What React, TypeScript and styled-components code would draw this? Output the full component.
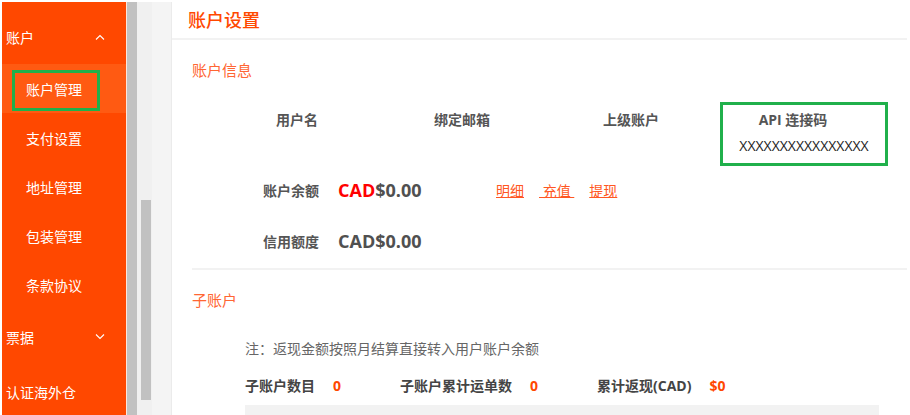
import React from "react";
import styled, { createGlobalStyle } from "styled-components";

const GlobalStyle = createGlobalStyle`
  html, body {
    margin: 0;
    padding: 0;
    background: #ffffff;
  }
  body {
    font-family: "Open Sans", "Noto Sans CJK SC", sans-serif;
  }
`;

const Page = styled.div`
  display: flex;
  height: 415px;
  overflow: hidden;
  background: #ffffff;
`;

const Sidebar = styled.nav`
  width: 124px;
  margin: 2px 0 0 2px;
  background: #ff4800;
  border-right: 1px solid #ffe6dc;
  color: #ffffff;
  font-size: 14px;
`;

const GroupHead = styled.div<{ $top?: number; $height: number }>`
  position: relative;
  display: flex;
  align-items: center;
  justify-content: space-between;
  height: ${(p) => p.$height}px;
  padding: ${(p) => p.$top || 0}px 21px 0 4px;
  box-sizing: border-box;
`;

const Item = styled.div<{ $active?: boolean }>`
  position: relative;
  display: flex;
  align-items: center;
  height: 49px;
  padding-left: 24px;
  background: ${(p) => (p.$active ? "#ff5a12" : "transparent")};
`;

const Mark = styled.span`
  position: absolute;
  left: 10px;
  top: 6px;
  width: 88px;
  height: 41px;
  border: 3px solid #20b04b;
  box-sizing: border-box;
`;

const Gutter = styled.div`
  width: 10px;
  margin-top: 2px;
  background: #c1c1c1;
`;

const Track = styled.div`
  width: 15px;
  margin-top: 2px;
  padding: 198px 0 0 4px;
  box-sizing: border-box;
  background: #f0f0f0;
`;

const Thumb = styled.div`
  width: 10px;
  height: 200px;
  background: #c1c1c1;
`;

const Backdrop = styled.div`
  width: 19px;
  margin-top: 2px;
  background: #f4f4f4;
  border-right: 1px solid #ebebeb;
`;

const Main = styled.main`
  flex: 1;
  margin-right: 3px;
  background: #ffffff;
`;

const Header = styled.header`
  height: 38px;
  display: flex;
  align-items: center;
  padding-left: 16px;
  border-bottom: 2px solid #f2f2f2;
  color: #ff4800;
  font-size: 18px;
  font-weight: 500;
`;

const Body = styled.div`
  padding: 20px 0 0 20px;
`;

const SectionTitle = styled.div<{ $gap?: number }>`
  margin-top: ${(p) => p.$gap || 0}px;
  line-height: 20px;
  font-size: 15px;
  color: #ff6633;
`;

const InfoGrid = styled.div`
  display: grid;
  grid-template-columns: 170px 160px 178px 168px;
  margin: 22px 0 0 20px;
  height: 64px;
`;

const InfoCell = styled.div<{ $boxed?: boolean }>`
  display: flex;
  flex-direction: column;
  align-items: center;
  padding-top: ${(p) => (p.$boxed ? 5 : 8)}px;
  border: ${(p) => (p.$boxed ? "3px solid #20b04b" : "none")};
  box-sizing: border-box;
`;

const InfoLabel = styled.div<{ $shift?: number }>`
  margin-right: ${(p) => p.$shift || 0}px;
  line-height: 20px;
  font-size: 14px;
  font-weight: 700;
  color: #555555;
`;

const Code = styled.div`
  margin-top: 6px;
  line-height: 20px;
  font-size: 14px;
  color: #222222;
`;

const MoneyRow = styled.div<{ $gap: number }>`
  display: flex;
  align-items: center;
  height: 24px;
  margin: ${(p) => p.$gap}px 0 0 71px;
`;

const MoneyLabel = styled.div`
  width: 75px;
  font-size: 14px;
  font-weight: 700;
  color: #555555;
`;

const Amount = styled.div`
  width: 158px;
  font-size: 18px;
  font-weight: 700;
  color: #505050;
`;

const Currency = styled.span<{ $red?: boolean }>`
  color: ${(p) => (p.$red ? "#ff0000" : "inherit")};
`;

const Links = styled.div`
  display: flex;
  gap: 15px;
`;

const TextLink = styled.a`
  font-size: 14px;
  color: #ff5722;
  text-decoration: underline;
  white-space: pre;
`;

const Divider = styled.div`
  height: 2px;
  margin-top: 15px;
  background: #f2f2f2;
`;

const Note = styled.div`
  margin: 29px 0 0 53px;
  line-height: 20px;
  font-size: 14px;
  color: #666666;
`;

const Stats = styled.div`
  display: flex;
  gap: 59px;
  margin: 17px 0 0 53px;
  line-height: 20px;
`;

const Stat = styled.div`
  display: flex;
  gap: 18px;
  font-size: 14px;
  font-weight: 700;
`;

const StatLabel = styled.span`
  color: #444444;
`;

const StatValue = styled.span`
  color: #ff4800;
`;

const TableHead = styled.div`
  width: 634px;
  height: 12px;
  margin: 9px 0 0 53px;
  background: #f2f2f2;
`;

function Chevron({ up }: { up?: boolean }) {
  return (
    <svg width="10" height="6" viewBox="0 0 10 6" fill="none">
      <path
        d={up ? "M1 5.5 L5 1.5 L9 5.5" : "M1 0.5 L5 4.5 L9 0.5"}
        stroke="#ffffff"
        strokeWidth="1.1"
      />
    </svg>
  );
}

export default function App() {
  return (
    <>
      <GlobalStyle />
      <Page>
        <Sidebar>
          <GroupHead $top={8} $height={62}>
            账户
            <Chevron up />
          </GroupHead>
          <Item $active>
            账户管理
            <Mark />
          </Item>
          <Item>支付设置</Item>
          <Item>地址管理</Item>
          <Item>包装管理</Item>
          <Item>条款协议</Item>
          <GroupHead $height={56}>
            票据
            <Chevron />
          </GroupHead>
          <GroupHead $height={54}>认证海外仓</GroupHead>
        </Sidebar>
        <Gutter />
        <Track>
          <Thumb />
        </Track>
        <Backdrop />
        <Main>
          <Header>账户设置</Header>
          <Body>
            <SectionTitle>账户信息</SectionTitle>
            <InfoGrid>
              <InfoCell>
                <InfoLabel>用户名</InfoLabel>
              </InfoCell>
              <InfoCell>
                <InfoLabel>绑定邮箱</InfoLabel>
              </InfoCell>
              <InfoCell>
                <InfoLabel>上级账户</InfoLabel>
              </InfoCell>
              <InfoCell $boxed>
                <InfoLabel $shift={22}>API 连接码</InfoLabel>
                <Code>XXXXXXXXXXXXXXXX</Code>
              </InfoCell>
            </InfoGrid>
            <MoneyRow $gap={12}>
              <MoneyLabel>账户余额</MoneyLabel>
              <Amount>
                <Currency $red>CAD</Currency>$0.00
              </Amount>
              <Links>
                <TextLink>明细</TextLink>
                <TextLink>{"\u00a0充值\u00a0"}</TextLink>
                <TextLink>提现</TextLink>
              </Links>
            </MoneyRow>
            <MoneyRow $gap={27}>
              <MoneyLabel>信用额度</MoneyLabel>
              <Amount>
                <Currency>CAD</Currency>$0.00
              </Amount>
            </MoneyRow>
            <Divider />
            <SectionTitle $gap={20}>子账户</SectionTitle>
            <Note>注：返现金额按照月结算直接转入用户账户余额</Note>
            <Stats>
              <Stat>
                <StatLabel>子账户数目</StatLabel>
                <StatValue>0</StatValue>
              </Stat>
              <Stat>
                <StatLabel>子账户累计运单数</StatLabel>
                <StatValue>0</StatValue>
              </Stat>
              <Stat>
                <StatLabel>累计返现(CAD)</StatLabel>
                <StatValue>$0</StatValue>
              </Stat>
            </Stats>
            <TableHead />
          </Body>
        </Main>
      </Page>
    </>
  );
}
